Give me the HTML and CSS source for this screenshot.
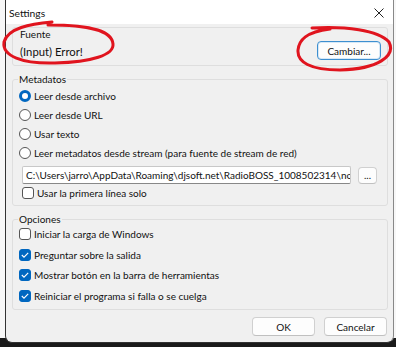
FILE: index.html
```html
<!DOCTYPE html>
<html>
<head>
<meta charset="utf-8">
<link rel="stylesheet" href="styles.css">
</head>
<body>
<div class="window">
  <div class="titlebar">
    <span class="title">Settings</span>
    <svg class="close" width="10" height="10" viewBox="0 0 10 10"><path d="M0.5 0.5 L9.5 9.5 M9.5 0.5 L0.5 9.5" stroke="#222" stroke-width="1" fill="none"/></svg>
  </div>
  <div class="body">
    <div class="group source">
      <div class="source-left">
        <div class="glabel">Fuente</div>
        <div class="error">(Input) Error!</div>
      </div>
      <button class="btn btn-change">Cambiar...</button>
    </div>
    <fieldset class="group meta">
      <legend>Metadatos</legend>
      <label class="row"><span class="radio on"></span>Leer desde archivo</label>
      <label class="row"><span class="radio"></span>Leer desde URL</label>
      <label class="row"><span class="radio"></span>Usar texto</label>
      <label class="row"><span class="radio"></span>Leer metadatos desde stream (para fuente de stream de red)</label>
      <div class="pathrow">
        <div class="input">C:\Users\jarro\AppData\Roaming\djsoft.net\RadioBOSS_1008502314\nowplaying.txt</div>
        <button class="btn btn-dots">...</button>
      </div>
      <label class="row sub"><span class="check"></span>Usar la primera línea solo</label>
    </fieldset>
    <fieldset class="group opts">
      <legend>Opciones</legend>
      <label class="row"><span class="check"></span>Iniciar la carga de Windows</label>
      <label class="row"><span class="check on"><svg width="8" height="6" viewBox="0 0 8 6"><path d="M0.8 3 L3 5.2 L7.2 0.8" stroke="#fff" stroke-width="1.1" fill="none"/></svg></span>Preguntar sobre la salida</label>
      <label class="row"><span class="check on"><svg width="8" height="6" viewBox="0 0 8 6"><path d="M0.8 3 L3 5.2 L7.2 0.8" stroke="#fff" stroke-width="1.1" fill="none"/></svg></span>Mostrar botón en la barra de herramientas</label>
      <label class="row"><span class="check on"><svg width="8" height="6" viewBox="0 0 8 6"><path d="M0.8 3 L3 5.2 L7.2 0.8" stroke="#fff" stroke-width="1.1" fill="none"/></svg></span>Reiniciar el programa si falla o se cuelga</label>
    </fieldset>
    <div class="footer">
      <button class="btn btn-ok">OK</button>
      <button class="btn btn-cancel">Cancelar</button>
    </div>
  </div>
  <svg class="marks" width="396" height="347" viewBox="0 0 396 347">
    <path d="M52 22 C 30 24, 8 28, 4 42 C 2 56, 22 64, 55 63 C 92 62, 114 55, 113 44 C 112 32, 95 25, 48 25" stroke="#e0141e" stroke-width="3" fill="none" stroke-linecap="round"/>
    <path d="M312 28 C 345 26, 378 30, 389 42 C 396 56, 378 69, 340 70 C 310 70, 297 62, 298 50 C 299 40, 306 32, 330 29" stroke="#e0141e" stroke-width="3" fill="none" stroke-linecap="round"/>
  </svg>
</div>
</body>
</html>
```

FILE: styles.css
```css
* { box-sizing: border-box; }
html, body { margin: 0; padding: 0; }
body {
  width: 396px;
  height: 347px;
  overflow: hidden;
  background: linear-gradient(#f7f7f7 0, #f7f7f7 338px, #1a1a1a 338px);
  font-family: Lato, "Noto Sans", sans-serif;
  font-size: 10px;
  color: #111;
}
.window {
  position: relative;
  margin-left: 5px;
  width: 389px;
  height: 343px;
  background: #f0f0f0;
  border-left: 1px solid #333;
  border-right: 1px solid #888;
  border-bottom: 1px solid #333;
  border-radius: 0 0 7px 7px;
  display: flex;
  flex-direction: column;
}
.titlebar {
  height: 24px;
  background: #ffffff;
  display: flex;
  align-items: center;
  justify-content: space-between;
  padding: 1px 9px 0 3px;
  flex: none;
}
.title { font-size: 10.3px; }
.body {
  padding: 3px 5px 0 6px;
  display: flex;
  flex-direction: column;
}
.group {
  border: 1px solid #dedede;
  border-radius: 3px;
  margin: 0;
}
.source {
  display: flex;
  justify-content: space-between;
  align-items: flex-start;
  padding: 0 7px 0 7px;
  height: 39px;
}
.glabel { line-height: 13px; }
.error { font-size: 11.3px; margin-top: 3px; line-height: 16px; }
.btn {
  font-family: inherit;
  font-size: 10px;
  background: #fdfdfd;
  border: 1px solid #d0d0d0;
  border-bottom-color: #c0c0c0;
  border-radius: 4px;
  color: #111;
  padding: 0;
}
.btn-change {
  width: 64px;
  height: 19px;
  margin-top: 13px;
  margin-right: -1px;
  border-color: #3d8fd0;
  box-shadow: inset 0 0 0 1px #d7e8f6;
}
fieldset.group { padding: 0 6px 3px 6px; }
legend { padding: 0 1px; margin-left: -1px; line-height: 13px; }
.meta { margin-top: 7px; }
.row { display: flex; align-items: center; height: 19px; gap: 3px; }
.radio {
  width: 12px; height: 12px; border-radius: 50%;
  border: 1px solid #555; background: #fff; flex: none;
}
.radio.on { border: 3.5px solid #0067c0; background: #fff; }
.check {
  width: 12px; height: 12px; border-radius: 3px;
  border: 1px solid #555; background: #fff; flex: none;
  display: flex; align-items: center; justify-content: center;
}
.check.on { background: #0067c0; border-color: #0067c0; }
.pathrow { display: flex; align-items: center; gap: 7px; margin-top: 4px; padding-left: 3px; }
.input {
  width: 329px; height: 18px; background: #fff;
  border: 1px solid #c8c8c8; border-bottom-color: #888;
  border-radius: 2px;
  white-space: nowrap; overflow: hidden; text-overflow: clip;
  padding: 0 3px; line-height: 16px;
}
.btn-dots { width: 19px; height: 17px; line-height: 8px; }
.sub { padding-left: 3px; height: 18px; }
.opts { margin-top: 7px; padding-bottom: 6px; padding-left: 8px; }
.opts .row { height: 20.5px; }
.opts .row:first-of-type { margin-top: -2px; }
.footer { display: flex; justify-content: flex-end; gap: 9px; padding: 7px 1px 0 0; }
.btn-ok, .btn-cancel { width: 63px; height: 19px; }
.marks { position: absolute; left: -6px; top: 0; pointer-events: none; }
```
